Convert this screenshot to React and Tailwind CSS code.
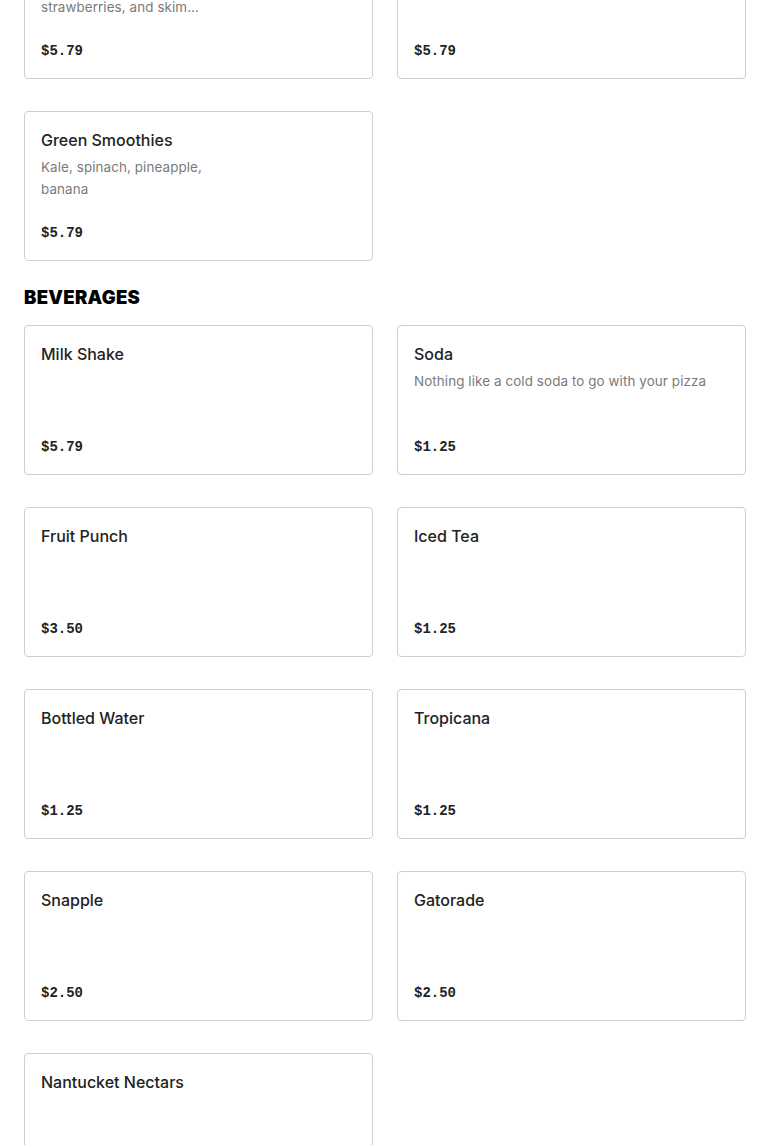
const smoothies = [
  { name: 'Strawberry Banana', desc: 'Fresh bananas, sweet\nstrawberries, and skim…', price: '$5.79' },
  { name: 'Mango Smoothie', desc: '', price: '$5.79' },
  { name: 'Green Smoothies', desc: 'Kale, spinach, pineapple,\nbanana', price: '$5.79' },
];

const beverages = [
  { name: 'Milk Shake', desc: '', price: '$5.79' },
  { name: 'Soda', desc: 'Nothing like a cold soda to go with your pizza', price: '$1.25' },
  { name: 'Fruit Punch', desc: '', price: '$3.50' },
  { name: 'Iced Tea', desc: '', price: '$1.25' },
  { name: 'Bottled Water', desc: '', price: '$1.25' },
  { name: 'Tropicana', desc: '', price: '$1.25' },
  { name: 'Snapple', desc: '', price: '$2.50' },
  { name: 'Gatorade', desc: '', price: '$2.50' },
  { name: 'Nantucket Nectars', desc: '', price: '$2.50' },
];

const ItemCard = ({ name, desc, price }) => (
  <div className="h-[150px] flex flex-col border border-[#cfcfcf] rounded-[4px] bg-white p-4">
    <h3 className="text-[16px] leading-6 font-medium text-[#222] font-['Inter',sans-serif]">
      {name}
    </h3>
    {desc && (
      <p className="mt-1 text-[13.4px] leading-[22px] text-[#7a7a7a] font-['Inter',sans-serif] whitespace-pre-line tracking-[0.1px]">
        {desc}
      </p>
    )}
    <div className="mt-auto text-[14px] leading-[22px] font-bold text-[#222] font-['Liberation_Mono',monospace]">
      {price}
    </div>
  </div>
);

export default function App() {
  return (
    <div className="min-h-screen bg-white overflow-hidden">
      <div className="px-6 mt-[-71px]">
        <div className="grid grid-cols-2 gap-x-6 gap-y-8">
          {smoothies.map((item) => (
            <ItemCard key={item.name} {...item} />
          ))}
        </div>

        <h2 className="mt-6 mb-4 text-[18.5px] leading-6 font-black text-black font-['Inter',sans-serif] tracking-[0.3px]">
          BEVERAGES
        </h2>

        <div className="grid grid-cols-2 gap-x-6 gap-y-8 pb-8">
          {beverages.map((item) => (
            <ItemCard key={item.name} {...item} />
          ))}
        </div>
      </div>
    </div>
  );
}
